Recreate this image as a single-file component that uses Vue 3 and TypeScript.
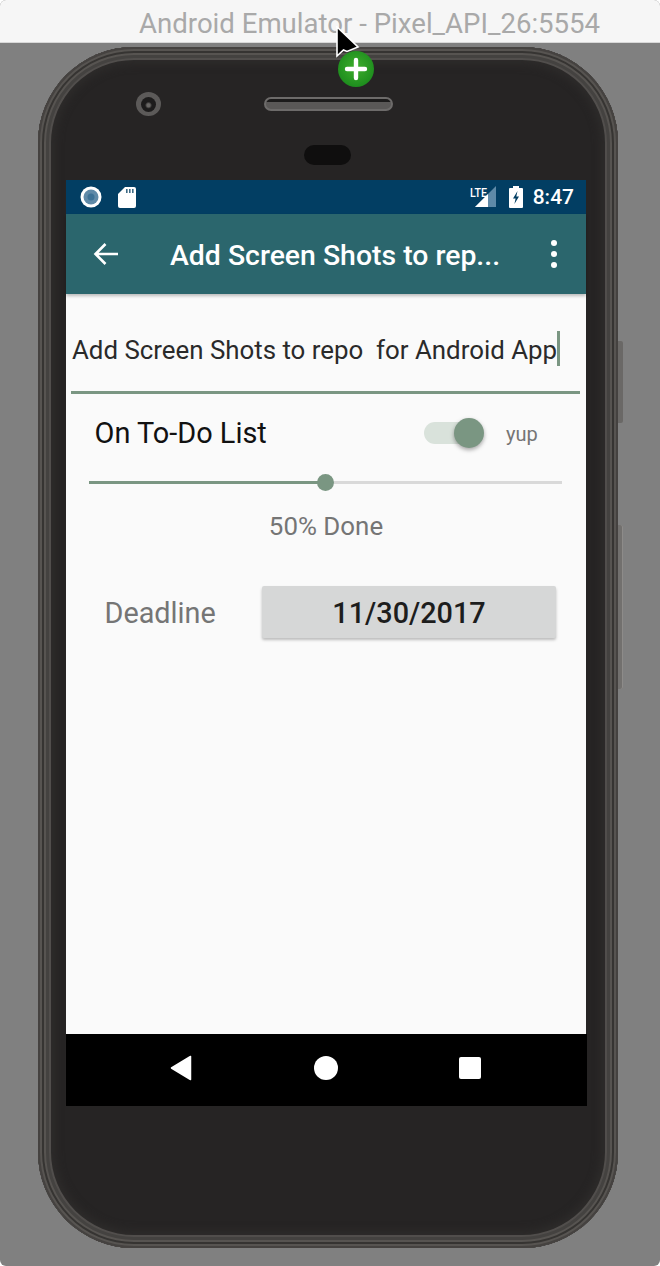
<script setup lang="ts">
import { ref } from 'vue'

const todoTitle = ref('Add Screen Shots to repo\u00a0 for Android App')
const percentDone = ref(50)
</script>

<template>
  <div class="window">
    <header class="titlebar">Android Emulator - Pixel_API_26:5554</header>

    <main class="stage">
      <div class="phone">
        <span class="side-key power" />
        <span class="side-key volume" />

        <div class="bezel-top">
          <div class="bezel-row">
            <span class="camera"><span class="lens" /></span>
            <span class="speaker" />
          </div>
          <span class="sensor" />
        </div>

        <div class="screen">
          <div class="status-bar">
            <svg class="st-icon" width="22" height="22" viewBox="0 0 22 22">
              <circle cx="11" cy="11" r="10.5" fill="#fff" />
              <circle cx="11" cy="11" r="7.5" fill="#5f8aa8" />
              <circle cx="11" cy="11" r="3.5" fill="#3d7296" />
            </svg>
            <svg class="st-icon sd" width="18" height="21" viewBox="0 0 18 21">
              <path d="M7 0h9a2 2 0 0 1 2 2v17a2 2 0 0 1-2 2H2a2 2 0 0 1-2-2V7z" fill="#fff" />
              <path d="M8 2h1.6v4H8zM11 2h1.6v4H11zM14 2h1.6v4H14z" fill="#3d6a85" />
            </svg>
            <span class="status-gap" />
            <div class="signal">
              <span class="lte">LTE</span>
              <svg width="22" height="22" viewBox="0 0 22 22">
                <path d="M21 0v21H0z" fill="#5f8aa8" />
                <path d="M13 8v13H0z" fill="#fff" />
              </svg>
            </div>
            <svg class="st-icon battery" width="14" height="22" viewBox="0 0 14 22">
              <path d="M4 0h6v2h3a1 1 0 0 1 1 1v18a1 1 0 0 1-1 1H1a1 1 0 0 1-1-1V3a1 1 0 0 1 1-1h3z" fill="#fff" />
              <path d="M8.5 5 4 12.5h2.6L5.4 18 10 10.4H7.3z" fill="#023e63" />
            </svg>
            <span class="clock">8:47</span>
          </div>

          <div class="app-bar">
            <svg class="back" width="26" height="24" viewBox="0 0 26 24">
              <path d="M25 12H3M12.5 2 2.5 12l10 10" fill="none" stroke="#fff" stroke-width="2.6" />
            </svg>
            <h1 class="app-title">Add Screen Shots to rep...</h1>
            <span class="overflow"><i /><i /><i /></span>
          </div>

          <div class="content">
            <div class="title-input">
              <span class="input-text">{{ todoTitle }}</span><span class="caret" />
            </div>

            <div class="todo-row">
              <span class="todo-label">On To-Do List</span>
              <span class="switch"><span class="switch-thumb" /></span>
              <span class="switch-text">yup</span>
            </div>

            <div class="slider">
              <span class="slider-fill" :style="{ width: percentDone + '%' }" />
              <span class="slider-thumb" />
            </div>
            <div class="percent">{{ percentDone }}% Done</div>

            <div class="deadline-row">
              <span class="deadline-label">Deadline</span>
              <button class="date-btn">11/30/2017</button>
            </div>
          </div>

          <div class="nav-bar">
            <svg width="22" height="26" viewBox="0 0 22 26">
              <path d="M20.5 1.5v23L1.5 13z" fill="#fff" stroke="#fff" stroke-width="1.5" stroke-linejoin="round" />
            </svg>
            <span class="nav-home" />
            <span class="nav-recent" />
          </div>
        </div>
      </div>
    </main>

    <svg class="cursor" width="44" height="66" viewBox="0 0 44 66">
      <path d="M2 1v29l6.5-6 3.5 1.5L23 21z" fill="#000" stroke="#fff" stroke-width="1.6" />
      <defs>
        <radialGradient id="addGreen" cx="0.5" cy="0.45" r="0.6">
          <stop offset="0" stop-color="#3fae2d" />
          <stop offset="1" stop-color="#1a8a1c" />
        </radialGradient>
      </defs>
      <circle cx="21" cy="43" r="18" fill="url(#addGreen)" />
      <path d="M21 34v18M12 43h18" stroke="#fff" stroke-width="4.4" stroke-linecap="round" />
    </svg>
  </div>
</template>

<style>
html,
body {
  margin: 0;
  background: #fff;
}
</style>

<style scoped>
.window {
  position: relative;
  display: flex;
  flex-direction: column;
  width: 660px;
  height: 1266px;
  border-radius: 6px;
  overflow: hidden;
  background: #808080;
  font-family: Roboto, "Noto Sans", sans-serif;
}

.titlebar {
  box-sizing: border-box;
  height: 43px;
  flex: none;
  padding: 8px 0 0 139px;
  background: #f6f6f6;
  border-bottom: 1px solid #d8d8d8;
  color: #a9a9a9;
  font-size: 27.6px;
  line-height: 32px;
  white-space: nowrap;
}

.stage {
  padding: 4px 0 0 38px;
}

.phone {
  position: relative;
  box-sizing: border-box;
  width: 580px;
  height: 1201px;
  padding: 0 32px 0 28px;
  border-radius: 96px;
  background: #262424;
  box-shadow:
    inset 0 0 0 2px #454240,
    inset 0 0 0 4px #575451,
    inset 0 0 0 6px #363432,
    inset 0 0 0 8px #575451,
    inset 0 0 0 11px #444240,
    inset 0 0 0 13px #514e4c,
    inset 0 0 8px 17px #2e2c2b;
}

.side-key {
  position: absolute;
  right: -5px;
  width: 5px;
  border-radius: 0 2px 2px 0;
  background: #6a6866;
}

.side-key.power {
  top: 294px;
  height: 82px;
}

.side-key.volume {
  top: 478px;
  height: 164px;
  background: #72706e;
  box-shadow: inset -1px 0 0 #8d8b89;
}

.bezel-top {
  display: flex;
  flex-direction: column;
  align-items: flex-start;
  box-sizing: border-box;
  height: 133px;
  padding-top: 45px;
}

.bezel-row {
  display: flex;
  align-items: center;
  padding-left: 70px;
}

.camera {
  display: flex;
  align-items: center;
  justify-content: center;
  width: 25px;
  height: 24px;
  border-radius: 50%;
  background: #5c5a59;
}

.lens {
  width: 15px;
  height: 15px;
  border-radius: 50%;
  background: radial-gradient(circle at 50% 55%, #6a6866 0 1.5px, #1d1c1c 3.5px);
}

.speaker {
  box-sizing: border-box;
  width: 129px;
  height: 14px;
  margin-left: 103px;
  border: 2px solid #6d6b6a;
  border-radius: 7px;
  background: linear-gradient(#1c1b1b 0 30%, #5a5857 30%);
}

.sensor {
  width: 47px;
  height: 20px;
  margin: 29px 0 0 238px;
  border-radius: 10px;
  background: #0f0e0e;
}

.screen {
  display: flex;
  flex-direction: column;
  width: 520px;
  height: 926px;
}

.status-bar {
  display: flex;
  align-items: center;
  box-sizing: border-box;
  height: 34px;
  flex: none;
  padding: 0 12px 0 14px;
  background: #023e63;
  color: #fff;
}

.sd {
  margin-left: 16px;
}

.status-gap {
  flex: 1;
}

.signal {
  display: flex;
  position: relative;
  width: 26px;
  height: 22px;
  justify-content: flex-end;
  margin-right: -1px;
}

.lte {
  position: absolute;
  left: -1px;
  top: 0;
  font-size: 13px;
  line-height: 14px;
  font-weight: 500;
  transform: scaleX(0.82);
  transform-origin: left;
}

.battery {
  margin-left: 13px;
}

.clock {
  margin-left: 10px;
  font-size: 21px;
  font-weight: 500;
}

.app-bar {
  position: relative;
  display: flex;
  align-items: center;
  box-sizing: border-box;
  height: 80px;
  flex: none;
  padding: 0 29px 0 27px;
  background: #2b666d;
  box-shadow: 0 2px 3px rgba(0, 0, 0, 0.25);
  z-index: 1;
}

.app-title {
  flex: 1;
  margin: 3px 0 0 51px;
  color: #fff;
  font-size: 28.4px;
  font-weight: 500;
  white-space: nowrap;
}

.overflow {
  display: flex;
  flex-direction: column;
  gap: 5px;
}

.overflow i {
  width: 6px;
  height: 6px;
  border-radius: 50%;
  background: #fff;
}

.content {
  flex: 1;
  display: flex;
  flex-direction: column;
  background: #fafafa;
}

.title-input {
  display: flex;
  align-items: center;
  box-sizing: border-box;
  height: 100px;
  margin: 0 6px 0 5px;
  padding: 14px 0 0 1px;
  border-bottom: 3px solid #7a9682;
}

.input-text {
  color: #2a2a2a;
  font-size: 25.85px;
  white-space: nowrap;
}

.caret {
  width: 3px;
  height: 35px;
  margin-top: -3px;
  background: #7a9682;
}

.todo-row {
  display: flex;
  align-items: center;
  height: 78px;
  padding: 0 0 0 28.5px;
}

.todo-label {
  width: 329.5px;
  color: #111;
  font-size: 28.9px;
}

.switch {
  position: relative;
  display: block;
  width: 52px;
  height: 22px;
  border-radius: 11px;
  background: #d9e2db;
}

.switch-thumb {
  position: absolute;
  right: -8px;
  top: -4px;
  width: 30px;
  height: 30px;
  border-radius: 50%;
  background: #7a9682;
  box-shadow: 0 2px 4px rgba(0, 0, 0, 0.35);
}

.switch-text {
  margin: 2px 0 0 30px;
  color: #757575;
  font-size: 20px;
}

.slider {
  position: relative;
  height: 3px;
  margin: 9px 24px 0 23px;
  background: #d9d9d9;
}

.slider-fill {
  display: block;
  height: 100%;
  background: #7a9682;
}

.slider-thumb {
  position: absolute;
  left: 50%;
  top: 50%;
  width: 17px;
  height: 17px;
  margin: -8.5px 0 0 -8.5px;
  border-radius: 50%;
  background: #7a9682;
}

.percent {
  margin-top: 27px;
  color: #757575;
  font-size: 25.9px;
  line-height: 30px;
  text-align: center;
}

.deadline-row {
  display: flex;
  align-items: center;
  margin-top: 45px;
  padding-left: 38.5px;
}

.deadline-label {
  width: 157.5px;
  margin-top: 2px;
  color: #757575;
  font-size: 28.8px;
}

.date-btn {
  width: 294px;
  height: 52px;
  padding: 1px 0 0;
  border: 0;
  border-radius: 2px;
  background: #d6d7d7;
  box-shadow: 0 2px 3px rgba(0, 0, 0, 0.25);
  color: #1d1d1d;
  font-family: inherit;
  font-size: 28.8px;
  font-weight: 500;
}

.nav-bar {
  display: flex;
  align-items: center;
  justify-content: space-between;
  box-sizing: border-box;
  height: 72px;
  flex: none;
  width: 521px;
  padding: 0 106px 4px 104px;
  background: #000;
}

.nav-home {
  width: 24px;
  height: 24px;
  border-radius: 50%;
  background: #fff;
}

.nav-recent {
  width: 22px;
  height: 22px;
  border-radius: 2px;
  background: #fff;
}

.cursor {
  position: absolute;
  left: 335px;
  top: 26px;
}
</style>
